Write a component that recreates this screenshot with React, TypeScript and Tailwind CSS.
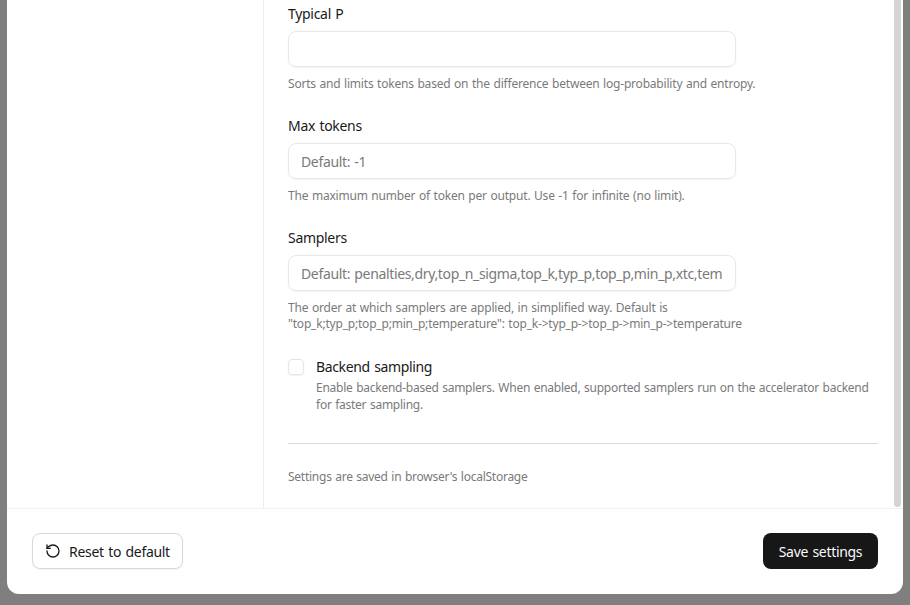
import { RotateCcw } from "lucide-react";

const font = { fontFamily: '"Noto Sans", sans-serif' };

const fields = [
  {
    label: "Typical P",
    placeholder: "",
    help: ["Sorts and limits tokens based on the difference between log-probability and entropy."],
  },
  {
    label: "Max tokens",
    placeholder: "Default: -1",
    help: ["The maximum number of token per output. Use -1 for infinite (no limit)."],
  },
  {
    label: "Samplers",
    placeholder: "Default: penalties,dry,top_n_sigma,top_k,typ_p,top_p,min_p,xtc,temperature",
    help: [
      "The order at which samplers are applied, in simplified way. Default is",
      '"top_k;typ_p;top_p;min_p;temperature": top_k->typ_p->top_p->min_p->temperature',
    ],
  },
];

export default function App() {
  return (
    <div className="w-[910px] h-[605px] overflow-hidden bg-[#7f7f7f] px-[7px] pb-[11px]" style={font}>
      <div className="flex flex-col h-full bg-white rounded-b-xl">
        <div className="flex h-[509px] shrink-0 overflow-hidden border-b border-[#f0f0f0]">
          <div className="w-[257px] shrink-0 border-r border-[#ececec]" />
          <div className="w-[630px] shrink-0 pl-6">
            <div className="w-[590px]">
              {fields.map((f) => (
                <div key={f.label} className="h-[112px] pt-[4px]">
                  <label className="block h-[20px] text-[14px] leading-[20px] text-[#1a1a1a] tracking-[-0.3px] [word-spacing:1px]">
                    {f.label}
                  </label>
                  <input
                    readOnly
                    placeholder={f.placeholder}
                    className="mt-[7px] block w-[448px] h-9 rounded-lg border border-[#e8e8e8] px-3 text-[14px] text-[#1a1a1a] placeholder:text-[#7a7a7a] tracking-[-0.35px] [word-spacing:1px] shadow-xs outline-none"
                  />
                  <div className="mt-[9px] text-[12px] leading-[16px] text-[#7a7a7a] tracking-[-0.2px] [word-spacing:0.7px]">
                    {f.help.map((line) => (
                      <p key={line}>{line}</p>
                    ))}
                  </div>
                </div>
              ))}
              <div className="flex gap-3 mt-[23px]">
                <div className="w-4 h-4 rounded border border-[#e5e5e5] shadow-xs shrink-0" />
                <div>
                  <p className="text-[14px] leading-[16px] text-[#1a1a1a] tracking-[-0.35px] [word-spacing:1px]">
                    Backend sampling
                  </p>
                  <p className="mt-[4px] text-[12px] leading-[17px] text-[#7a7a7a] tracking-[-0.25px] [word-spacing:0.7px]">
                    <span className="whitespace-nowrap">
                      Enable backend-based samplers. When enabled, supported samplers run on the accelerator backend
                    </span>
                    <br />
                    for faster sampling.
                  </p>
                </div>
              </div>
              <div className="mt-[30px] border-t border-[#d9d9d9]" />
              <p className="mt-[25px] text-[12px] leading-[16px] text-[#7a7a7a] tracking-[-0.25px] [word-spacing:0.7px]">
                Settings are saved in browser's localStorage
              </p>
            </div>
          </div>
          <div className="w-[7px] h-[507px] bg-[#d4d4d4] rounded-b-full shrink-0" />
        </div>
        <div className="flex flex-1 items-start justify-between pt-[24px] pl-[25px] pr-[25px]">
          <button className="flex items-center justify-center gap-2 w-[151px] h-9 rounded-lg border border-[#d9d9d9] bg-white text-[14px] text-[#1a1a1a] tracking-[-0.3px] [word-spacing:1px] shadow-xs">
            <RotateCcw size={16} strokeWidth={2} />
            Reset to default
          </button>
          <button className="w-[115px] h-9 rounded-lg bg-[#171717] text-[14px] text-[#fafafa] tracking-[-0.3px] [word-spacing:1px]">
            Save settings
          </button>
        </div>
      </div>
    </div>
  );
}
